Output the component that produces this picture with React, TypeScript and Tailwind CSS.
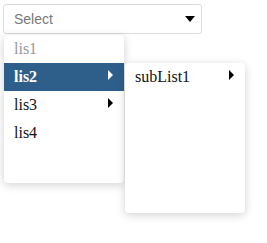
import React from "react";

type Item = { label: string; disabled?: boolean; active?: boolean; sub?: boolean };

const items: Item[] = [
  { label: "lis1", disabled: true },
  { label: "lis2", active: true, sub: true },
  { label: "lis3", sub: true },
  { label: "lis4" },
];

function Arrow({ light }: { light?: boolean }) {
  return (
    <span
      className={`mt-[7px] h-0 w-0 border-y-[5px] border-l-[5px] border-y-transparent ${
        light ? "border-l-white" : "border-l-black"
      }`}
    />
  );
}

export default function App() {
  return (
    <div className="h-[243px] w-[267px] bg-white pl-[3px] pt-[4px]">
      <div className="relative w-[199px]">
        {/* Select box */}
        <div className="flex h-[30px] items-center justify-between rounded-[3px] border border-[#dcdcdc] bg-white pl-[10px] pr-[6px] font-['Liberation_Sans',sans-serif] text-[14px] text-[#777]">
          <span>Select</span>
          <span className="h-0 w-0 border-x-[5px] border-t-[6px] border-x-transparent border-t-black" />
        </div>

        {/* Dropdown menu */}
        <div className="absolute left-[1px] top-[31px] h-[148px] w-[120px] rounded-[4px] bg-white shadow-[0_2px_10px_rgba(0,0,0,0.18)] font-['Liberation_Serif',serif] text-[16px]">
          {items.map((it) => (
            <div
              key={it.label}
              className={`relative flex h-[28px] items-start justify-between pl-[10px] pr-[11px] ${
                it.active ? "bg-[#2e5f8a] font-bold text-white" : it.disabled ? "text-[#999]" : "text-[#111]"
              } ${it.label === "lis1" ? "rounded-t-[4px]" : ""}`}
            >
              <span className="leading-[28px]">{it.label}</span>
              {it.sub && <Arrow light={it.active} />}

              {/* Sub menu */}
              {it.active && (
                <div className="absolute left-[121px] top-0 h-[150px] w-[120px] rounded-[4px] bg-white font-normal text-[#111] shadow-[0_2px_10px_rgba(0,0,0,0.18)]">
                  <div className="flex h-[28px] items-start justify-between pl-[10px] pr-[11px]">
                    <span className="leading-[28px]">subList1</span>
                    <Arrow />
                  </div>
                </div>
              )}
            </div>
          ))}
        </div>
      </div>
    </div>
  );
}
